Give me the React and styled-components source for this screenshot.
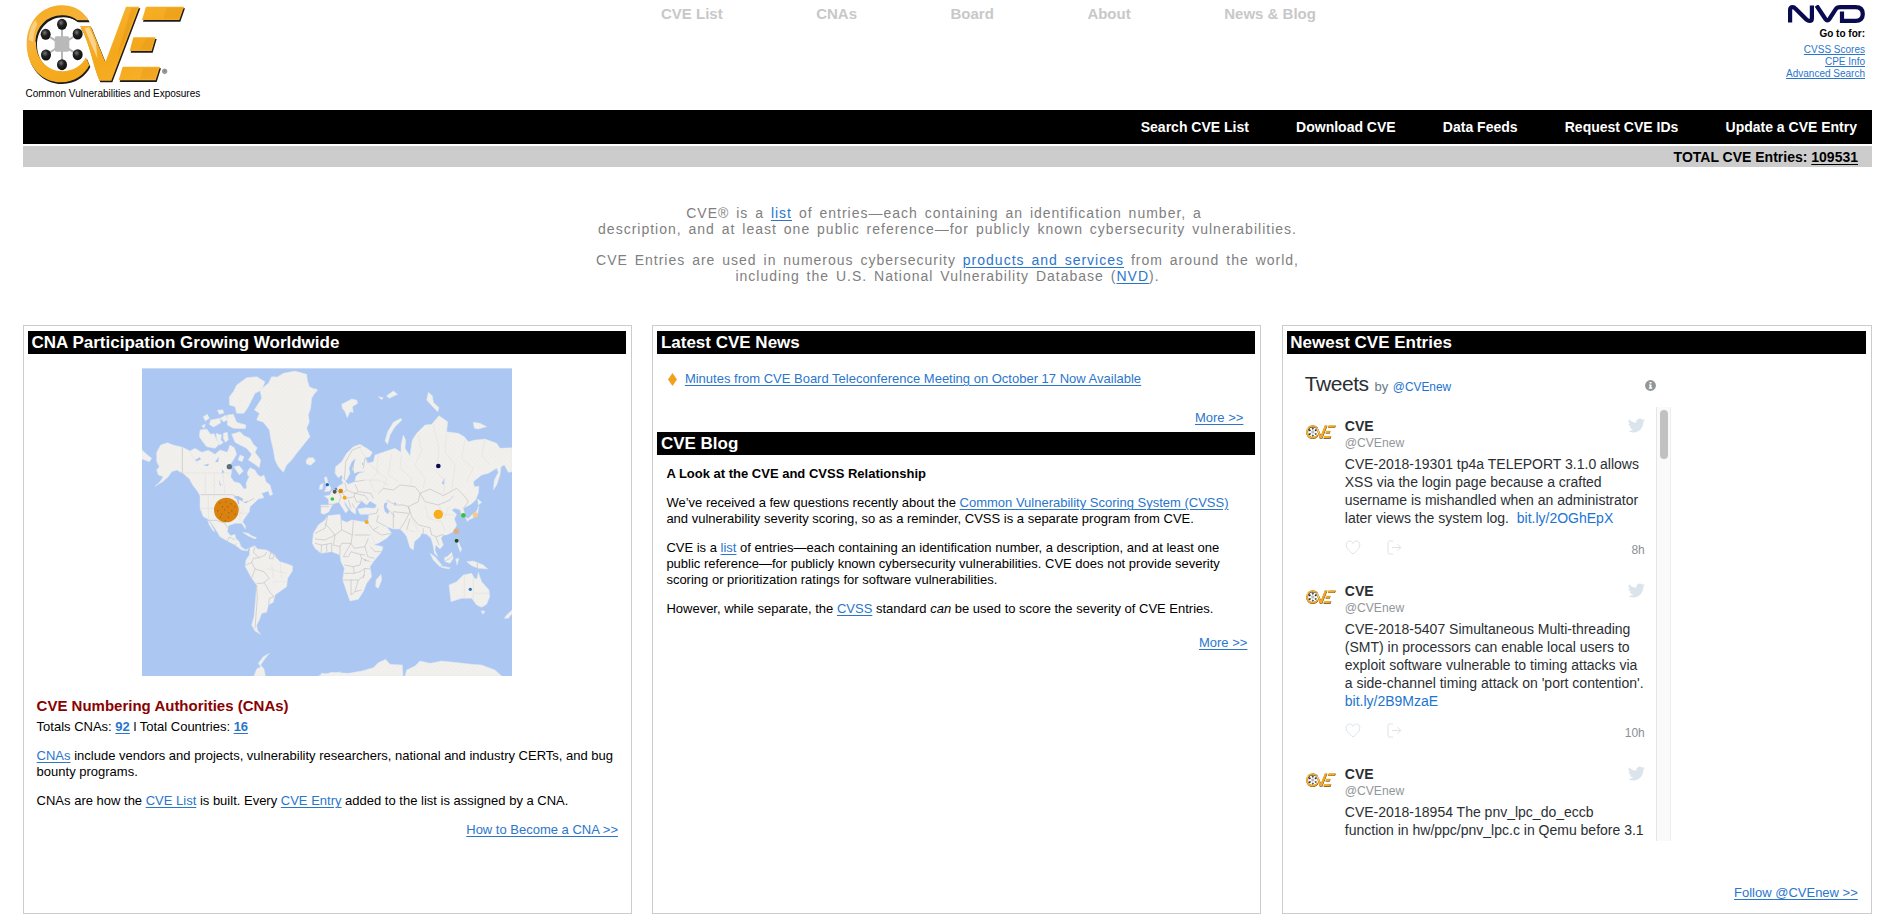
import React from 'react';
import styled, { createGlobalStyle } from 'styled-components';

const GlobalStyle = createGlobalStyle`
  * { box-sizing: border-box; }
  body { margin: 0; background: #fff; overflow: hidden; }
  p, h1, h2, h3 { margin: 0; font-weight: normal; }
`;

const Page = styled.div`
  width: 1882px;
  height: 919px;
  padding: 0 10px 0 23px;
  font: 13px/16px "Liberation Sans", Arial, Helvetica, sans-serif;
  color: #000;
`;

const Link = styled.a`
  color: #2b76cc;
  text-decoration: underline;
  text-underline-offset: 2px;
  text-decoration-thickness: 1px;
  font-weight: ${(p) => (p.$bold ? 'bold' : 'inherit')};
`;

/* ---------- masthead ---------- */

const Masthead = styled.header`
  display: flex;
  height: 110px;
`;

const Brand = styled.div`
  width: 638px;
  padding: 4px 0 0 3px;
  font-size: 10px;
  line-height: 12px;
  svg { display: block; }
`;

const Caption = styled.div`
  margin: 3.5px 0 0 -0.5px;
`;

const TopNav = styled.nav`
  display: flex;
  gap: 93.5px;
  padding-top: 5px;
  font-size: 15px;
  line-height: 18px;
  font-weight: bold;
  color: #c8c8c8;
`;

const Nvd = styled.div`
  display: flex;
  flex-direction: column;
  align-items: flex-end;
  margin-left: auto;
  padding: 5px 7px 0 0;
  font-size: 10px;
  line-height: 12px;
  a { text-underline-offset: 1px; }
`;

const GoTo = styled.div`
  font-weight: bold;
  margin: 5px 0 4px;
`;

const MainNav = styled.nav`
  display: flex;
  justify-content: flex-end;
  align-items: center;
  gap: 47.2px;
  height: 34px;
  padding-right: 15px;
  background: #000;
  color: #fff;
  font-size: 14px;
  font-weight: bold;
`;

const TotalBar = styled.div`
  height: 21px;
  margin-top: 2px;
  padding-right: 14px;
  background: #ccc;
  text-align: right;
  font-size: 14px;
  line-height: 22px;
  font-weight: bold;
  u { text-underline-offset: 2px; text-decoration-thickness: 1px; }
`;

const Intro = styled.div`
  margin-top: 38px;
  height: 120px;
  text-align: center;
  font-size: 14px;
  line-height: 16px;
  letter-spacing: 1px;
  word-spacing: 2px;
  color: #808080;
  p + p { margin-top: 15px; }
`;

/* ---------- panels ---------- */

const Columns = styled.main`
  display: grid;
  grid-template-columns: 609px 609px 590px;
  column-gap: 20.4px;
  height: 589px;
`;

const Panel = styled.section`
  display: flex;
  flex-direction: column;
  border: 1px solid #ccc;
  padding: 5px 5px 0 4px;
`;

const PanelTitle = styled.h2`
  flex: none;
  height: 23px;
  margin-top: ${(p) => p.$top || 0}px;
  padding-left: 3.5px;
  background: #000;
  color: #fff;
  font-size: 17px;
  line-height: 24px;
  font-weight: bold;
`;

const MapFrame = styled.div`
  margin: 14px 0 0 114px;
  svg { display: block; }
`;

const Body = styled.div`
  padding: ${(p) => p.$pad};
  p + p { margin-top: 13px; }
`;

const CnaHeading = styled.h3`
  color: #8b0000;
  font-size: 15px;
  line-height: 20px;
  font-weight: bold;
  margin-bottom: 3px;
`;

const RightLink = styled.div`
  text-align: right;
  margin-top: ${(p) => p.$top}px;
  padding-right: ${(p) => p.$right}px;
`;

const NewsItem = styled.div`
  display: flex;
  align-items: center;
  gap: 8px;
  padding: 17px 0 0 10.5px;
`;

const BlogHeading = styled.h3`
  font-size: 13px;
  line-height: 16px;
  font-weight: bold;
  margin-bottom: 13px;
`;

/* ---------- tweets ---------- */

const Timeline = styled.div`
  width: 366px;
  margin-left: 18px;
  color: #2b2f33;
`;

const TimelineHead = styled.div`
  display: flex;
  align-items: baseline;
  height: 53px;
  padding-top: 17px;
  line-height: 26px;
  svg { margin-left: auto; margin-right: 15px; align-self: flex-start; margin-top: 9px; }
`;

const TweetsTitle = styled.h3`
  font-size: 21px;
  letter-spacing: -0.45px;
  margin-right: 6px;
`;

const By = styled.span`
  font-size: 13px;
  color: #697882;
  margin-right: 4.5px;
`;

const Handle = styled.a`
  font-size: 11.9px;
  color: #1b74d0;
`;

const Scroller = styled.div`
  display: flex;
  height: 434px;
  overflow: hidden;
`;

const TweetList = styled.div`
  width: 351px;
`;

const Track = styled.div`
  width: 15px;
  border-left: 1px solid #e6e6e6;
  border-right: 1px solid #ededed;
  background: #fafafa;
  padding: 3px 3px 0;
`;

const Thumb = styled.div`
  width: 8px;
  height: 49px;
  border-radius: 4px;
  background: #c1c1c1;
`;

const TweetRow = styled.article`
  display: flex;
  padding: 10px 11px 0 0;
  height: ${(p) => p.$height}px;
`;

const Avatar = styled.div`
  width: 40px;
  flex: none;
  padding: 8px 0 0 1px;
`;

const TweetMain = styled.div`
  flex: 1;
  white-space: nowrap;
`;

const TweetHead = styled.div`
  display: flex;
  justify-content: space-between;
`;

const Author = styled.div`
  font-size: 14px;
  line-height: 18px;
  font-weight: bold;
`;

const AuthorHandle = styled.div`
  font-size: 12.1px;
  line-height: 17px;
  color: #919699;
`;

const TweetText = styled.p`
  margin-top: 3px;
  font-size: 14px;
  line-height: 18px;
  a { color: #1b74d0; }
`;

const TweetFoot = styled.div`
  display: flex;
  align-items: center;
  gap: 26px;
  margin-top: 10px;
  height: 20px;
  font-size: 12px;
  color: #8a9094;
  span { margin-left: auto; padding-top: 5px; }
`;

/* ---------- drawings ---------- */

const logoStrokes = [
  'M266 62 C246 25 212 15 183 16 C120 18 80 70 80 132 C80 200 125 247 183 247 C225 247 255 222 268 196 L258 172 C245 200 215 214 188 214 C140 214 108 175 108 130 C108 85 140 47 186 47 C205 47 220 52 232 62 Z',
  'M240 78 L272 78 L316 187 L378 20 L418 20 L334 242 L298 242 C280 200 266 120 240 78 Z',
  'M438 20 H552 L538 60 H426 Z',
  'M400 112 H467 L455 153 H389 Z',
  'M368 200 H480 L467 241 H356 Z',
];
const logoNodes = [[186, 73], [137, 103], [233, 102], [138, 165], [233, 164], [186, 194]];

const CveLogo = ({ width, height, small }) => (
  <svg width={width} height={height} viewBox={small ? '78 12 480 240' : '78 12 525 240'} preserveAspectRatio="none">
    <defs>
      <radialGradient id="node" cx="0.4" cy="0.35" r="0.6">
        <stop offset="0" stopColor="#777" />
        <stop offset="0.5" stopColor="#222" />
        <stop offset="1" stopColor="#111" />
      </radialGradient>
      <linearGradient id="gold" gradientUnits="userSpaceOnUse" x1="80" y1="20" x2="180" y2="240" spreadMethod="reflect">
        <stop offset="0" stopColor="#f5ac20" />
        <stop offset="0.45" stopColor="#f6b33c" />
        <stop offset="0.6" stopColor="#f7af26" />
        <stop offset="1" stopColor="#f4a81c" />
      </linearGradient>
    </defs>
    {logoStrokes.map((d) => <path key={d} d={d} fill="#1c1a1c" transform="translate(3 5)" />)}
    {logoStrokes.map((d) => <path key={d} d={d} fill="url(#gold)" />)}
    <path d="M108 125 C110 82 142 48 186 48 C205 48 220 53 232 63 H266" fill="none" stroke="#1c1a1c" strokeWidth="4" />
    <path d="M254 84 L268 82 L288 130 L292 175 L272 130 Z" fill="#fbe2b0" opacity="0.75" />
    <path d="M86 120 C88 90 96 70 106 60 L112 72 C104 90 100 105 100 125 Z" fill="#fbe2b0" opacity="0.6" />
    <path d="M394 24 L412 24 L372 130 L352 165 Z" fill="#dd8a12" opacity="0.35" />
    <path d="M500 24 H546 L536 56 H490 Z" fill="#dd8a12" opacity="0.25" />
    <path d="M440 116 H462 L452 149 H420 Z" fill="#dd8a12" opacity="0.25" />
    <path d="M430 204 H474 L464 237 H420 Z" fill="#dd8a12" opacity="0.25" />
    <g stroke="#b5b5b5" strokeWidth="6">
      <path d="M186 73 V194 M137 103 L233 164 M233 102 L138 165" />
    </g>
    <rect x="164" y="109" width="44" height="46" rx="6" fill="#b9b9b9" />
    {logoNodes.map(([x, y]) => <ellipse key={`${x}-${y}`} cx={x} cy={y} rx="15" ry="16.5" fill="url(#node)" />)}
    {!small && (
      <g>
        <circle cx="494" cy="214" r="7" fill="#aaa" stroke="#666" strokeWidth="1.5" />
        <path d="M492 218 V211 H496 V214 H492 M494 214 L497 218" stroke="#555" fill="none" />
      </g>
    )}
  </svg>
);

const NvdLogo = () => (
  <svg width="77" height="18" viewBox="0 0 77 18" fill="none" stroke="#0a0a50" strokeWidth="4.2">
    <path d="M2.1 17.5 V4.6 Q2.1 2.2 4.6 2.2 Q6.2 2.2 7.6 3.8 L18.5 14.6 Q20 15.8 21.5 15.8 Q23.9 15.8 23.9 13.4 V0.5" />
    <path d="M28.5 0.5 L37.4 14 Q39.4 16.8 41.4 14 L47.6 4.4 Q49 2.2 52 2.2 H67.5 Q74.8 2.2 74.8 9 Q74.8 15.8 67.5 15.8 H54 V6.5" />
  </svg>
);

const westLand = [
  'M50 262 L62 240 82 233 100 240 128 247 150 258 165 250 185 262 205 256 225 268 240 255 262 262 270 240 283 248 290 268 280 285 270 300 275 320 272 335 282 350 300 355 312 372 320 370 318 355 325 340 322 322 330 308 345 315 352 328 362 335 372 330 378 350 390 360 398 388 390 392 385 378 365 385 372 398 355 402 345 412 330 425 328 440 312 462 308 470 316 482 316 492 305 475 285 475 265 482 262 500 272 512 285 508 287 520 298 530 303 545 318 555 325 550 322 558 305 555 285 540 262 528 240 515 228 495 218 480 205 463 190 455 180 430 180 392 172 378 158 360 150 345 128 325 110 315 95 320 85 335 68 350 45 364 60 350 70 335 55 330 50 315 58 305 50 290 Z',
  'M203 464 L212 476 225 500 218 496 207 478 Z',
  'M180 195 L200 192 212 208 222 206 230 225 240 235 225 250 200 245 188 230 178 215 Z',
  'M228 205 L245 210 242 225 250 232 240 240 230 222 Z M250 205 L262 202 265 225 256 232 250 220 Z',
  'M275 208 L300 200 312 212 330 220 340 238 352 248 345 262 362 285 358 308 340 295 325 285 335 268 320 250 300 240 285 232 Z',
  'M268 95 L280 80 290 60 320 38 350 35 375 50 365 75 345 85 335 105 325 125 312 145 290 145 285 125 268 120 Z',
  'M190 155 L202 148 208 160 196 168 Z M212 165 L240 160 242 174 220 186 208 178 Z M232 136 L248 134 252 144 238 148 Z M240 160 L258 150 264 165 250 170 Z M185 182 L196 178 192 190 Z',
  'M262 150 L280 148 290 172 318 180 316 191 280 190 262 180 Z',
  'M282 305 L298 302 310 318 298 330 Z M300 270 L312 275 306 290 294 285 Z',
  'M343 135 L365 100 360 75 385 55 395 35 412 36 430 25 465 18 500 28 502 45 508 65 530 75 515 100 512 130 505 150 508 170 500 190 510 215 490 240 470 265 455 285 440 300 430 322 415 305 405 285 400 255 393 225 388 195 370 172 350 165 358 145 Z',
  'M498 287 L505 278 520 278 526 288 512 301 500 297 Z',
  'M330 548 L345 542 352 552 380 555 405 570 412 582 420 590 440 596 458 603 457 618 443 640 440 665 405 690 400 712 385 720 380 742 365 745 358 765 350 780 352 795 362 808 345 798 335 780 342 755 347 700 350 660 335 640 316 605 318 585 328 570 Z',
  'M308 502 L325 505 335 512 350 518 345 522 325 513 Z',
  'M342 933 L350 912 362 905 355 895 370 875 388 865 372 885 362 900 372 912 376 933 Z',
  'M6 255 L20 268 35 280 28 290 6 282 Z',
];

const eastLand = [
  'M18 420 L42 420 40 402 28 393 45 390 50 378 62 372 72 362 85 355 80 345 84 335 92 350 100 358 120 350 122 335 132 325 150 320 130 320 118 325 112 312 118 295 122 280 110 290 102 310 105 325 95 345 88 348 80 330 70 338 60 325 62 305 80 290 95 265 115 245 135 238 155 250 172 262 165 275 150 278 158 295 175 290 180 270 215 258 240 250 258 262 258 240 265 210 272 225 270 250 285 272 290 235 292 225 305 205 330 180 350 178 372 152 398 170 395 200 430 205 448 215 460 230 480 225 510 222 545 235 555 250 591 248 591 320 580 322 568 300 558 305 555 330 545 360 535 375 538 345 550 322 545 310 520 325 500 330 475 350 478 365 492 364 490 385 482 405 468 418 445 430 450 452 440 455 436 435 420 430 410 435 425 448 418 462 425 480 415 500 395 510 385 510 378 520 385 540 375 552 362 540 360 555 368 575 358 565 355 545 348 520 335 508 320 505 315 515 298 530 295 555 285 548 275 515 268 505 255 492 235 492 215 485 230 505 215 520 190 535 178 538 165 505 155 480 160 462 162 448 135 448 128 432 150 428 180 430 185 420 165 408 155 420 140 408 130 420 122 432 122 448 110 440 95 420 88 408 90 420 100 435 92 444 80 425 72 412 60 415 50 422 42 440 28 448 18 445 Z',
  'M38 452 L75 448 78 465 95 472 110 465 155 472 158 485 170 510 180 540 204 545 200 560 175 590 165 605 170 635 155 655 145 680 130 703 105 708 95 680 83 645 88 610 78 590 75 570 50 560 18 565 0 550 -8 535 -5 505 10 480 30 465 Z',
  'M198 628 L200 645 190 670 182 665 183 645 Z',
  'M28 338 L35 335 38 350 48 370 45 378 28 380 35 365 Z M15 360 L25 355 22 373 13 373 Z',
  'M80 118 L95 110 110 102 125 105 128 115 112 125 115 142 105 140 97 158 90 140 82 130 Z',
  'M190 95 L205 98 200 104 Z M215 92 L235 78 248 88 235 94 222 100 Z',
  'M258 160 L235 172 218 200 210 228 218 238 225 210 240 185 260 166 Z',
  'M340 82 L352 92 355 112 372 128 368 140 352 124 335 105 Z',
  'M475 172 L495 175 515 185 490 192 478 190 Z',
  'M488 402 L500 412 490 420 Z M492 422 L488 448 472 460 455 468 470 450 484 440 Z M452 458 L460 460 458 470 Z',
  'M345 565 L360 575 380 600 375 605 355 585 Z M378 603 L405 608 402 612 378 607 Z M388 578 L398 574 410 562 415 580 405 595 390 590 Z M422 582 L432 580 426 600 Z',
  'M424 520 L430 522 432 535 440 552 436 562 430 545 Z',
  'M455 590 L475 588 505 600 518 612 490 610 470 602 Z',
  'M402 660 L425 650 445 630 470 625 478 640 486 642 490 622 500 650 522 675 524 695 515 718 500 727 485 720 470 700 440 700 408 710 Z',
  'M498 738 L510 738 504 748 Z M591 735 L575 750 568 760 580 760 591 746 Z',
  'M0 70 L8 76 0 84 Z',
  'M10 933 L50 922 100 925 140 918 175 908 190 893 212 883 225 898 262 900 264 933 Z',
  'M270 933 L275 915 300 903 315 888 345 895 380 888 430 893 470 898 500 900 540 915 560 933 Z',
];

const westBorders = [
  'M127 247 V325 L150 345 M182 389 H278 L300 402 312 412 328 408 342 400',
  'M205 466 H230 L255 475 262 488 M262 528 L268 516 285 525 M290 535 L285 540',
  'M345 545 L340 562 358 578 375 570 380 560 M392 562 L388 580 398 582 402 572 M318 600 L335 592 340 580 358 578 M335 640 L345 612 335 592 M350 655 L368 655 388 640 372 620 345 612 M350 660 L352 700 345 790 M372 652 L390 682 402 695 388 700 386 720 M392 562 L412 580',
];
const westFaint = [
  'M127 324 H272 M196 325 V388 M223 325 V388 M248 325 L255 388 M180 430 H225 M205 392 V465 M222 392 V400 M298 420 L300 470 M300 445 H325 M312 430 L300 445 M148 260 L175 300 M395 600 L400 640 M420 592 L425 640 M380 610 L440 625 M400 650 L440 650',
];
const eastBorders = [
  'M0 505 L30 490 38 452 M30 475 L60 510 80 495 78 465 M80 495 L112 510 115 468 M118 510 H165 M112 510 L108 535 118 550 150 545 160 520 M60 510 L30 525 0 522 M60 510 L55 540 75 545 80 535 108 535 M0 535 L20 540 18 565 M20 540 L50 535 50 560 M35 538 V562 M75 545 L75 570 M108 535 L85 575 H100 L108 560 135 568 150 570 M88 600 L115 605 118 625 H88 M115 605 L135 600 140 580 135 568 M118 625 L135 620 150 610 165 612 M83 645 H130 L150 630 M108 645 V690 L120 680 140 675 M130 645 L120 680 M165 545 L180 560 200 560 M150 545 L158 575 178 580 M140 580 L165 590 M150 610 L145 640',
  'M18 425 H42 M42 418 L70 418 M66 372 L78 395 72 412 M90 355 L95 375 82 385 95 400 M95 375 L118 385 130 380 120 358 M95 400 L118 395 118 385 M118 395 L125 412 140 408 M100 405 L108 430 M118 430 L112 415 M120 350 L150 345 M130 380 L168 385 175 400 M120 385 L150 392 160 405 M115 290 L115 325 M150 278 L145 310 M88 345 L92 290 112 255 138 245',
  'M162 448 L185 445 190 430 M190 450 L185 470 215 485 M160 475 L175 495 190 485 M175 495 L200 510 230 505 M190 385 L205 370 235 375 255 360 300 365 315 385 310 410 280 425 265 420 240 420 215 405 M235 440 L280 445 M235 440 L235 490 M255 492 L270 470 285 440 280 425 M280 425 L290 455 310 480 345 488 350 510 M315 385 L345 372 385 392 410 378 425 370 450 395 460 410 445 430 M315 385 L330 410 370 420 405 405 415 392 M285 460 L275 495 M325 490 L325 505 M350 510 L365 515 385 508 M362 515 L372 540 M215 430 L240 455',
  'M487 594 V610 M390 588 L405 580 412 572',
];
const eastFaint = [
  'M135 250 L165 300 190 320 165 350 180 380 M190 270 L185 320 215 340 205 370 M230 265 L220 330 250 350 M260 270 L255 310 290 340 285 365 M310 210 L320 260 300 300 330 340 325 370 M355 180 L372 250 365 320 390 350 385 385 M395 205 L390 260 420 300 410 378 M450 225 L440 280 475 310 455 350 M510 225 L500 270 525 300 M150 345 L190 345 220 360 M448 632 V700 M475 640 V705 M478 685 H524 M290 460 L310 500 M330 420 L340 460 380 470 390 500 M370 420 L390 450 420 450 M400 425 L390 460 M280 495 L300 500',
];
const markers = [
  [259, 435, 37, '#d9820f'], [268, 305, 8, '#5f6f7c'], [562, 359, 5, '#1f63a8'], [584, 380, 6, '#555'],
  [588, 372, 4, '#5b90b8'], [577, 402, 5.5, '#37c23a'], [602, 378, 7, '#d9820f'], [614, 398, 6, '#f3a81c'],
  [680, 471, 6, '#f7aa18'], [895, 448, 14, '#f9ad1b'], [895, 303, 7, '#0b0b50'], [970, 451, 7, '#37c23a'],
  [1006, 450, 8, '#f7c98a'], [949, 499, 8.5, '#ddb08c'], [950, 527, 6, '#174f24'], [991, 673, 5, '#2c77cc'],
];

const WorldMap = () => (
  <svg width="370" height="308" viewBox="6 9 1110 924">
    <defs>
      <pattern id="speckle" width="14" height="14" patternUnits="userSpaceOnUse">
        <rect x="2" y="2" width="1.6" height="1.6" fill="#d9d9dc" />
        <rect x="9" y="9" width="1.6" height="1.6" fill="#d9d9dc" />
      </pattern>
    </defs>
    <rect x="6" y="9" width="1110" height="924" fill="#abc7f2" />
    <rect x="6" y="9" width="1110" height="3" fill="#c9dbf5" />
    <g fill="#f1f0ec" stroke="#dfe8f2" strokeWidth="1.5" strokeLinejoin="round">
      {westLand.map((d) => <path key={d} d={d} />)}
      <path d="M540 933 L545 924 575 930 600 920 V933 Z" />
      <g transform="translate(525 0)">{eastLand.map((d) => <path key={d} d={d} />)}</g>
    </g>
    <g fill="url(#speckle)">
      {westLand.map((d) => <path key={d} d={d} />)}
      <g transform="translate(525 0)">{eastLand.map((d) => <path key={d} d={d} />)}</g>
    </g>
    <g fill="#abc7f2">
      <path d="M280 395 L295 393 310 402 306 408 296 404 298 418 294 418 290 402 Z M312 412 L325 409 318 415 Z" />
      <path d="M165 285 l14 -8 4 6 -12 6 Z M190 300 l18 -4 -6 8 Z M225 290 l12 -14 -3 16 Z M245 312 l8 10 -6 4 Z M238 345 l6 18 -5 -3 Z M320 335 l8 -3 -4 8 Z" />
      <g transform="translate(525 0)">
        <path d="M208 415 L218 412 214 425 222 438 220 448 210 440 206 425 Z M236 412 l8 2 -4 8 Z M380 355 l10 -16 -4 20 Z M148 582 l6 3 -4 6 Z M140 292 l6 4 -3 6 Z" />
      </g>
    </g>
    <g fill="none" stroke="#bdbdc2" strokeWidth="1.8" strokeLinejoin="round">
      {westBorders.map((d) => <path key={d} d={d} />)}
      <g transform="translate(525 0)">{eastBorders.map((d) => <path key={d} d={d} />)}</g>
    </g>
    <g fill="none" stroke="#dcdcdf" strokeWidth="1.4" strokeLinejoin="round">
      {westFaint.map((d) => <path key={d} d={d} />)}
      <g transform="translate(525 0)">{eastFaint.map((d) => <path key={d} d={d} />)}</g>
    </g>
    {markers.map(([x, y, r, fill]) => <circle key={`${x}-${y}`} cx={x} cy={y} r={r} fill={fill} />)}
    <g fill="#8a5310">
      {[[256, 409], [271, 415], [238, 412], [246, 424], [262, 424], [283, 424], [232, 436], [253, 433], [274, 436], [244, 446], [265, 442], [284, 446], [240, 455], [263, 455], [254, 466]].map(([x, y]) => (
        <rect key={`${x}-${y}`} x={x} y={y} width="3" height="3" />
      ))}
    </g>
  </svg>
);

const Diamond = () => (
  <svg width="9" height="13" viewBox="0 0 9 13"><path d="M4.5 0 L9 6.5 L4.5 13 L0 6.5 Z" fill="#f0a01a" /></svg>
);
const InfoIcon = () => (
  <svg width="11" height="11" viewBox="0 0 11 11">
    <circle cx="5.5" cy="5.5" r="5.4" fill="#919699" />
    <path d="M4.5 2 h2 v1.5 h-2 Z M4 4.5 h2.5 v3 h.8 v1.3 H3.8 V7.5 h.8 V5.7 H4 Z" fill="#fff" />
  </svg>
);
const Bird = () => (
  <svg width="17" height="17" viewBox="0 0 24 24" fill="#dbe3eb">
    <path d="M23.95 4.57a10 10 0 0 1-2.82.77 4.96 4.96 0 0 0 2.16-2.72c-.95.55-2 .96-3.12 1.19a4.92 4.92 0 0 0-8.39 4.48A13.9 13.9 0 0 1 1.64 3.16a4.92 4.92 0 0 0 1.52 6.57 4.9 4.9 0 0 1-2.23-.61v.06a4.92 4.92 0 0 0 3.95 4.83 5 5 0 0 1-2.21.08 4.94 4.94 0 0 0 4.6 3.42A9.87 9.87 0 0 1 0 19.54a13.99 13.99 0 0 0 7.55 2.21c9.05 0 14-7.5 14-13.98 0-.21 0-.42-.02-.63a9.94 9.94 0 0 0 2.42-2.57z" />
  </svg>
);
const Heart = () => (
  <svg width="16" height="15" viewBox="0 0 16 15" fill="none" stroke="#dde2e8" strokeWidth="1">
    <path d="M8 14 C4.5 11.2 1.2 8.2 1.2 4.8 C1.2 2.6 2.7 1 4.6 1 C6.2 1 7.4 1.9 8 3.4 C8.6 1.9 9.8 1 11.4 1 C13.3 1 14.8 2.6 14.8 4.8 C14.8 8.2 11.5 11.2 8 14 Z" />
  </svg>
);
const Share = () => (
  <svg width="15" height="15" viewBox="0 0 15 15" fill="none" stroke="#dfe2e7" strokeWidth="1">
    <path d="M6 1 H2.5 Q1 1 1 2.5 V12.5 Q1 14 2.5 14 H6 M5 7.5 H13.5 M10.5 4.2 L13.8 7.5 L10.5 10.8" />
  </svg>
);

const Tweet = ({ height, age, children }) => (
  <TweetRow $height={height}>
    <Avatar><CveLogo width={30} height={14} small /></Avatar>
    <TweetMain>
      <TweetHead>
        <div>
          <Author>CVE</Author>
          <AuthorHandle>@CVEnew</AuthorHandle>
        </div>
        <Bird />
      </TweetHead>
      <TweetText>{children}</TweetText>
      {age && <TweetFoot><Heart /><Share /><span>{age}</span></TweetFoot>}
    </TweetMain>
  </TweetRow>
);

export default function App() {
  return (
    <Page>
      <GlobalStyle />
      <Masthead>
        <Brand>
          <CveLogo width={175} height={80} />
          <Caption>Common Vulnerabilities and Exposures</Caption>
        </Brand>
        <TopNav>
          {['CVE List', 'CNAs', 'Board', 'About', 'News & Blog'].map((t) => <span key={t}>{t}</span>)}
        </TopNav>
        <Nvd>
          <NvdLogo />
          <GoTo>Go to for:</GoTo>
          <Link>CVSS Scores</Link>
          <Link>CPE Info</Link>
          <Link>Advanced Search</Link>
        </Nvd>
      </Masthead>
      <MainNav>
        {['Search CVE List', 'Download CVE', 'Data Feeds', 'Request CVE IDs', 'Update a CVE Entry'].map((t) => <span key={t}>{t}</span>)}
      </MainNav>
      <TotalBar>TOTAL CVE Entries: <u>109531</u></TotalBar>
      <Intro>
        <p>CVE® is a <Link>list</Link> of entries—each containing an identification number, a&nbsp;<br />
          description, and at least one public reference—for publicly known cybersecurity vulnerabilities.</p>
        <p>CVE Entries are used in numerous cybersecurity <Link>products and services</Link> from around the world,<br />
          including the U.S. National Vulnerability Database (<Link>NVD</Link>).</p>
      </Intro>
      <Columns>
        <Panel>
          <PanelTitle>CNA Participation Growing Worldwide</PanelTitle>
          <MapFrame><WorldMap /></MapFrame>
          <Body $pad="20px 0 0 8.6px">
            <CnaHeading>CVE Numbering Authorities (CNAs)</CnaHeading>
            <p>Totals CNAs: <Link $bold>92</Link> l Total Countries: <Link $bold>16</Link></p>
            <p><Link>CNAs</Link> include vendors and projects, vulnerability researchers, national and industry CERTs, and bug<br />bounty programs.</p>
            <p>CNAs are how the <Link>CVE List</Link> is built. Every <Link>CVE Entry</Link> added to the list is assigned by a CNA.</p>
            <RightLink $top={13} $right={8}><Link>How to Become a CNA &gt;&gt;</Link></RightLink>
          </Body>
        </Panel>
        <Panel>
          <PanelTitle>Latest CVE News</PanelTitle>
          <NewsItem><Diamond /><Link>Minutes from CVE Board Teleconference Meeting on October 17 Now Available</Link></NewsItem>
          <RightLink $top={23} $right={12}><Link>More &gt;&gt;</Link></RightLink>
          <PanelTitle $top={6}>CVE Blog</PanelTitle>
          <Body $pad="11px 0 0 9px">
            <BlogHeading>A Look at the CVE and CVSS Relationship</BlogHeading>
            <p>We’ve received a few questions recently about the <Link>Common Vulnerability Scoring System (CVSS)</Link><br />and vulnerability severity scoring, so as a reminder, CVSS is a separate program from CVE.</p>
            <p>CVE is a <Link>list</Link> of entries—each containing an identification number, a description, and at least one<br />public reference—for publicly known cybersecurity vulnerabilities. CVE does not provide severity<br />scoring or prioritization ratings for software vulnerabilities.</p>
            <p>However, while separate, the <Link>CVSS</Link> standard <em>can</em> be used to score the severity of CVE Entries.</p>
            <RightLink $top={18} $right={8}><Link>More &gt;&gt;</Link></RightLink>
          </Body>
        </Panel>
        <Panel>
          <PanelTitle>Newest CVE Entries</PanelTitle>
          <Timeline>
            <TimelineHead>
              <TweetsTitle>Tweets</TweetsTitle><By>by</By><Handle>@CVEnew</Handle>
              <InfoIcon />
            </TimelineHead>
            <Scroller>
              <TweetList>
                <Tweet height={165} age="8h">
                  CVE-2018-19301 tp4a TELEPORT 3.1.0 allows<br />XSS via the login page because a crafted<br />username is mishandled when an administrator<br />later views the system log.&nbsp; <a>bit.ly/2OGhEpX</a>
                </Tweet>
                <Tweet height={183} age="10h">
                  CVE-2018-5407 Simultaneous Multi-threading<br />(SMT) in processors can enable local users to<br />exploit software vulnerable to timing attacks via<br />a side-channel timing attack on 'port contention'.<br /><a>bit.ly/2B9MzaE</a>
                </Tweet>
                <Tweet height={165}>
                  CVE-2018-18954 The pnv_lpc_do_eccb<br />function in hw/ppc/pnv_lpc.c in Qemu before 3.1
                </Tweet>
              </TweetList>
              <Track><Thumb /></Track>
            </Scroller>
          </Timeline>
          <RightLink $top={44} $right={8}><Link>Follow @CVEnew &gt;&gt;</Link></RightLink>
        </Panel>
      </Columns>
    </Page>
  );
}
